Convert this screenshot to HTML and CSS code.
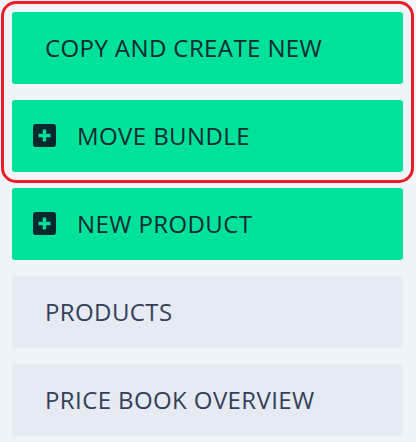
FILE: index.html
```html
<!DOCTYPE html>
<html lang="en">
<head>
  <meta charset="UTF-8" />
  <meta name="viewport" content="width=device-width, initial-scale=1.0"/>
  <title>Actions</title>
  <link rel="stylesheet" href="styles.css">
</head>
<body>

  <div class="menu">
    <!-- grup seçili: kırmızı çerçeve -->
    <div class="group selected">
      <button class="btn green">COPY AND CREATE NEW</button>
      <button class="btn green with-icon">
        <svg class="plus" viewBox="0 0 23 23"><rect width="23" height="23" rx="3" fill="#06282f"/><path d="M11.5 5.5v12M5.5 11.5h12" stroke="#00e19a" stroke-width="3.4"/></svg>
        MOVE BUNDLE
      </button>
    </div>
    <button class="btn green with-icon">
      <svg class="plus" viewBox="0 0 23 23"><rect width="23" height="23" rx="3" fill="#06282f"/><path d="M11.5 5.5v12M5.5 11.5h12" stroke="#00e19a" stroke-width="3.4"/></svg>
      NEW PRODUCT
    </button>
    <button class="btn grey">PRODUCTS</button>
    <button class="btn grey">PRICE BOOK OVERVIEW</button>
  </div>

</body>
</html>
```

FILE: styles.css
```css
body {
  margin: 0;
  padding: 0;
  background: #eff4f8;
  font-family: 'Open Sans', sans-serif;
}

.menu {
  padding: 12px 13px 8px 12px;
  display: flex;
  flex-direction: column;
  gap: 16.5px;
}

.group {
  display: flex;
  flex-direction: column;
  gap: 16.5px;
}

.group.selected {
  border-radius: 4px;
  outline: 3px solid #ee1c25;
  outline-offset: 8px;
}

.btn {
  display: flex;
  align-items: center;
  height: 71.5px;
  padding: 0 0 0 21px;
  border: 0;
  border-radius: 3px;
  font-family: inherit;
  font-size: 24px;
  letter-spacing: 0.4px;
  text-align: left;
  cursor: pointer;
}

.btn:not(.with-icon) {
  padding-left: 33px;
}

.green {
  background: #00e19a;
  color: #0a2b33;
}

.grey {
  background: #e5eaf3;
  color: #34405a;
}

.plus {
  width: 23px;
  height: 23px;
  margin-right: 21px;
  flex-shrink: 0;
}
```
